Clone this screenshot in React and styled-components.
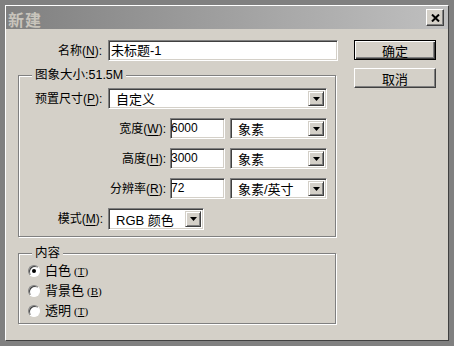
import React from 'react';
import styled, { createGlobalStyle } from 'styled-components';

const Global = createGlobalStyle`
  html, body { margin: 0; padding: 0; background: #808080; }
  body {
    font-family: "Liberation Sans", "Noto Sans CJK SC", sans-serif;
    font-size: 12px;
    color: #000;
  }
`;

const Screen = styled.div`
  width: 454px;
  height: 346px;
  box-sizing: border-box;
  padding: 5px 0 0 5px;
  background: #808080;
`;

const Window = styled.div`
  width: 444px;
  height: 336px;
  box-sizing: border-box;
  background: #d4d0c8;
  border-left: 1px solid #ffffff;
  border-top: 1px solid #ffffff;
  border-right: 1px solid #404040;
  border-bottom: 1px solid #404040;
  display: flex;
  flex-direction: column;
`;

const TitleBar = styled.div`
  flex: none;
  height: 23px;
  box-sizing: border-box;
  background: linear-gradient(to right, #808080, #c0c0c0);
  display: flex;
  align-items: center;
  justify-content: space-between;
  padding: 0 4px 0 2px;
`;

const Title = styled.div`
  font-family: "Noto Sans CJK SC", sans-serif;
  font-weight: 700;
  font-size: 16px;
  line-height: 18px;
  letter-spacing: 1px;
  color: #c8c4bc;
  padding-top: 3px;
`;

const CloseBtn = styled.div`
  width: 18px;
  height: 17px;
  box-sizing: border-box;
  background: #d4d0c8;
  border-style: solid;
  border-width: 1px;
  border-color: #ffffff #404040 #404040 #ffffff;
  box-shadow: inset -1px -1px 0 #808080;
  display: flex;
  align-items: center;
  justify-content: center;
`;

const Body = styled.div`
  flex: 1;
  display: flex;
  gap: 16px;
  padding: 11px 0 0 12px;
`;

const Main = styled.div`
  width: 320px;
  display: flex;
  flex-direction: column;
`;

const Row = styled.div`
  display: flex;
  align-items: center;
  height: ${p => p.$h || 21}px;
  margin-top: ${p => p.$mt || 0}px;
`;

const Label = styled.div`
  flex: none;
  width: ${p => p.$w}px;
  box-sizing: border-box;
  text-align: ${p => p.$align || 'right'};
  padding-right: ${p => p.$pr || 0}px;
  white-space: nowrap;
  line-height: 14px;
  u { text-decoration: underline; text-underline-offset: 2px; }
`;

const sunken = `
  box-sizing: border-box;
  background: #ffffff;
  border-style: solid;
  border-width: 1px;
  border-color: #808080 #ffffff #ffffff #808080;
  box-shadow: inset 1px 1px 0 #404040, inset -1px -1px 0 #d4d0c8;
`;

const TextField = styled.div`
  ${sunken}
  width: ${p => p.$w}px;
  height: 21px;
  padding: 2px 0 0 ${p => p.$pl ?? 2}px;
  line-height: 15px;
  white-space: nowrap;
  font-size: ${p => p.$fs || 12}px;
`;

const Select = styled.div`
  ${sunken}
  width: ${p => p.$w}px;
  height: ${p => p.$h || 21}px;
  margin-left: ${p => p.$ml || 0}px;
  padding: 2px;
  display: flex;
  align-items: stretch;
`;

const SelectText = styled.div`
  flex: 1;
  padding-left: ${p => p.$pl || 5}px;
  display: flex;
  align-items: center;
  white-space: nowrap;
  font-size: 13px;
`;

const DropBtn = styled.div`
  flex: none;
  width: 16px;
  box-sizing: border-box;
  background: #d4d0c8;
  border-style: solid;
  border-width: 1px;
  border-color: #d4d0c8 #404040 #404040 #d4d0c8;
  box-shadow: inset 1px 1px 0 #ffffff, inset -1px -1px 0 #808080;
  display: flex;
  align-items: center;
  justify-content: center;
`;

const Group = styled.div`
  border: 1px solid #808080;
  box-shadow: inset 1px 1px 0 #ffffff, 1px 1px 0 #ffffff;
  width: 318px;
  box-sizing: border-box;
  margin-top: ${p => p.$mt}px;
  padding: 0 0 ${p => p.$pb}px ${p => p.$pl}px;
  display: flex;
  flex-direction: column;
`;

const Legend = styled.div`
  align-self: flex-start;
  height: 14px;
  line-height: 14px;
  margin: -8px 0 0 ${p => p.$ml}px;
  padding: 0 3px;
  background: #d4d0c8;
  white-space: nowrap;
  font-size: 12.5px;
`;

const FieldRows = styled.div`
  display: flex;
  flex-direction: column;
  gap: 9px;
  margin-top: 6px;
`;

const RadioList = styled.div`
  display: flex;
  flex-direction: column;
  margin-top: 1px;
`;

const RadioRow = styled.div`
  display: flex;
  align-items: center;
  gap: 5px;
  height: 20px;
`;

const RadioCircle = styled.span`
  flex: none;
  width: 12px;
  height: 12px;
  box-sizing: border-box;
  border-radius: 50%;
  border: 1px solid;
  border-color: #808080 #ffffff #ffffff #808080;
  background: #ffffff;
  box-shadow: inset 1px 1px 0 #404040;
  display: flex;
  align-items: center;
  justify-content: center;
  &::after {
    content: '';
    width: 4px;
    height: 4px;
    border-radius: 50%;
    background: #000;
    display: ${p => (p.$on ? 'block' : 'none')};
  }
`;

const RadioText = styled.span`
  line-height: 14px;
  white-space: nowrap;
  font-size: 13px;
`;

const Mnemonic = styled.span`
  font-family: "Liberation Serif", serif;
  font-size: 11px;
  margin-left: 3px;
  u { text-decoration: underline; text-underline-offset: 1px; }
`;

const Buttons = styled.div`
  width: 82px;
  display: flex;
  flex-direction: column;
  gap: 8px;
`;

const Button = styled.div`
  height: 20px;
  box-sizing: border-box;
  background: #d4d0c8;
  display: flex;
  align-items: center;
  justify-content: center;
  font-size: 13px;
  border-style: solid;
  border-width: 1px;
  border-color: ${p => (p.$default ? '#000 #000 #000 #000' : '#ffffff #404040 #404040 #ffffff')};
  box-shadow: ${p =>
    p.$default
      ? 'inset 1px 1px 0 #ffffff, inset -1px -1px 0 #404040, inset -2px -2px 0 #808080'
      : 'inset -1px -1px 0 #808080'};
`;

const Arrow = () => (
  <svg width="7" height="4" viewBox="0 0 7 4">
    <path d="M0 0 H7 L3.5 4 Z" fill="#000" />
  </svg>
);

const CloseX = () => (
  <svg width="9" height="8" viewBox="0 0 9 8">
    <path d="M1 0.5 L8 7.5 M8 0.5 L1 7.5" stroke="#000" strokeWidth="2" />
  </svg>
);

const Dropdown = ({ w, ml, h, children }) => (
  <Select $w={w} $ml={ml} $h={h}>
    <SelectText>{children}</SelectText>
    <DropBtn>
      <Arrow />
    </DropBtn>
  </Select>
);

export default function App() {
  return (
    <>
      <Global />
      <Screen>
        <Window>
          <TitleBar>
            <Title>新建</Title>
            <CloseBtn>
              <CloseX />
            </CloseBtn>
          </TitleBar>
          <Body>
            <Main>
              <Row>
                <Label $w={90} $pr={6}>
                  名称(<u>N</u>):
                </Label>
                <TextField $w={230} $fs={13}>未标题-1</TextField>
              </Row>

              <Group $mt={14} $pl={16} $pb={6}>
                <Legend $ml={-3}>图象大小:51.5M</Legend>
                <FieldRows>
                  <Row>
                    <Label $w={73} $align="left">
                      预置尺寸(<u>P</u>):
                    </Label>
                    <Dropdown w={219}>自定义</Dropdown>
                  </Row>
                  <Row>
                    <Label $w={135} $pr={4}>
                      宽度(<u>W</u>):
                    </Label>
                    <TextField $w={55} $pl={0}>6000</TextField>
                    <Dropdown w={97} ml={5}>象素</Dropdown>
                  </Row>
                  <Row>
                    <Label $w={135} $pr={4}>
                      高度(<u>H</u>):
                    </Label>
                    <TextField $w={55} $pl={0}>3000</TextField>
                    <Dropdown w={97} ml={5}>象素</Dropdown>
                  </Row>
                  <Row>
                    <Label $w={135} $pr={4}>
                      分辨率(<u>R</u>):
                    </Label>
                    <TextField $w={55} $pl={0}>72</TextField>
                    <Dropdown w={97} ml={5}>象素/英寸</Dropdown>
                  </Row>
                  <Row $h={22}>
                    <Label $w={73} $pr={5}>
                      模式(<u>M</u>):
                    </Label>
                    <Dropdown w={96} h={22}>RGB 颜色</Dropdown>
                  </Row>
                </FieldRows>
              </Group>

              <Group $mt={16} $pl={9} $pb={2}>
                <Legend $ml={4}>内容</Legend>
                <RadioList>
                  <RadioRow>
                    <RadioCircle $on />
                    <RadioText>
                      白色<Mnemonic>(<u>T</u>)</Mnemonic>
                    </RadioText>
                  </RadioRow>
                  <RadioRow>
                    <RadioCircle />
                    <RadioText>
                      背景色<Mnemonic>(<u>B</u>)</Mnemonic>
                    </RadioText>
                  </RadioRow>
                  <RadioRow>
                    <RadioCircle />
                    <RadioText>
                      透明<Mnemonic>(<u>T</u>)</Mnemonic>
                    </RadioText>
                  </RadioRow>
                </RadioList>
              </Group>
            </Main>

            <Buttons>
              <Button $default>确定</Button>
              <Button>取消</Button>
            </Buttons>
          </Body>
        </Window>
      </Screen>
    </>
  );
}
